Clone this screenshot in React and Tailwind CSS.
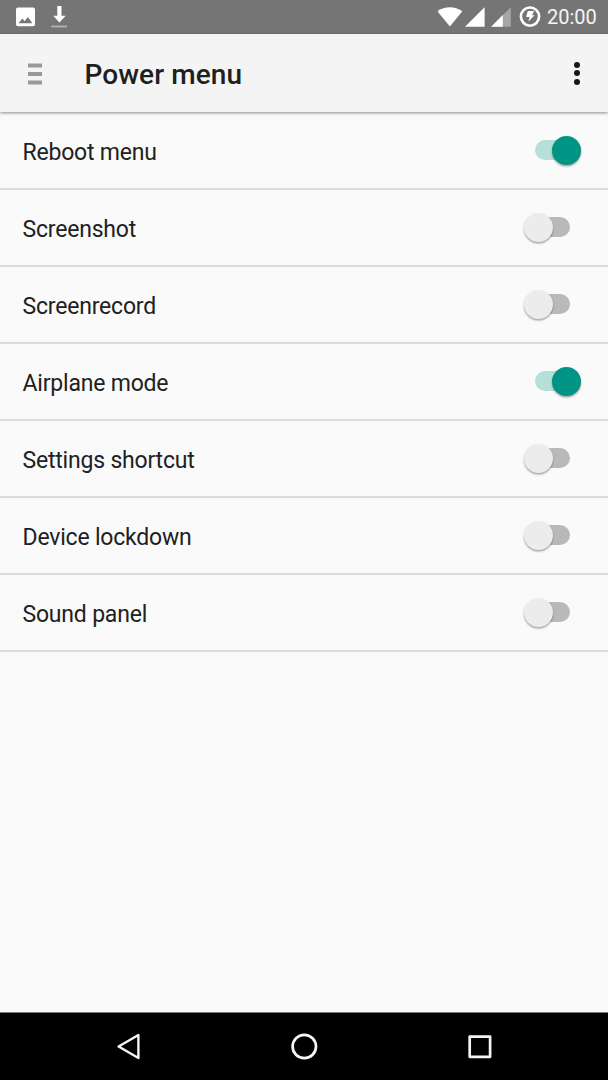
import React, { useState } from 'react'

const items = [
  { label: 'Reboot menu', on: true },
  { label: 'Screenshot', on: false },
  { label: 'Screenrecord', on: false },
  { label: 'Airplane mode', on: true },
  { label: 'Settings shortcut', on: false },
  { label: 'Device lockdown', on: false },
  { label: 'Sound panel', on: false },
]

function Switch({ on, onChange }) {
  return (
    <button
      role="switch"
      aria-checked={on}
      onClick={onChange}
      className={`relative mb-[1px] flex h-[20px] w-[57px] items-center cursor-pointer ${on ? 'justify-end pr-[11px]' : 'justify-start pl-[11px]'}`}
    >
      <span className={`h-[20px] w-[35px] rounded-full ${on ? 'bg-[#b7dfda]' : 'bg-[#b9b9b9]'}`}></span>
      <span
        className={`absolute top-[-4px] h-[28.5px] w-[28.5px] rounded-full shadow-[0_1.5px_2px_rgba(0,0,0,0.35)] ${on ? 'right-[0.5px] bg-[#009485]' : 'left-0 bg-[#ececec]'}`}
      ></span>
    </button>
  )
}

function StatusBar() {
  return (
    <div className="flex h-[34px] items-center justify-between bg-[#757575] pl-[16px] pr-[11px]">
      <div className="flex items-center">
        <svg width="19" height="34" viewBox="0 0 19 34">
          <path fill="#fff" fillRule="evenodd" d="M2 7.500h15a2 2 0 0 1 2 2v14.700a2 2 0 0 1-2 2H2a2 2 0 0 1-2-2V9.500a2 2 0 0 1 2-2zM2.600 23.200h13.800l-4.500-6.200-3.300 4.200-2.300-2.700z" />
        </svg>
        <svg className="ml-[16px]" width="17" height="34" viewBox="0 0 17 34">
          <path fill="#fff" d="M6.300 6h4.200v9.800h4.200L8.400 22.400 2.200 15.800h4.100z" />
          <path fill="#b3b3b3" d="M.3 25.600h15.700v1.800H.3z" />
        </svg>
      </div>
      <div className="flex items-center">
        <svg width="106" height="34" viewBox="0 0 106 34">
          <path fill="#fff" d="M-.6 11.200C6.600 5.800 17 5.800 24.300 11.200L11.900 26.600z" />
          <path fill="#fff" d="M46.600 7.200v19.500H27z" />
          <path fill="#a3a8a6" d="M72.800 7.200v19.500H53.200z" />
          <path fill="#fff" d="M64.800 15.100v11.600H53.200z" />
          <circle cx="92" cy="16.600" r="9.100" fill="none" stroke="#fff" strokeWidth="2.600" />
          <path fill="#fff" d="M89.800 11h6.300l-2 4.200h2.500l-6.300 6.500 1.300-4.600h-3.500z" />
        </svg>
        <span className="ml-[3px] w-[50px] whitespace-nowrap text-[20px] leading-[34px] text-[#f5f5f5]">20:00</span>
      </div>
    </div>
  )
}

function Header() {
  return (
    <header className="relative mb-[1px] flex h-[78px] items-center bg-[#f4f4f4] pl-[28px] pr-[28px] shadow-[0_1px_3px_rgba(0,0,0,0.45)]">
      <button className="mt-[2px] cursor-pointer" aria-label="Open menu">
        <svg width="14" height="22" viewBox="0 0 14 22" fill="#999">
          <path d="M0 .6h14v3.800H0zM0 9.100h14v3.800H0zM0 17.600h14v3.800H0z" />
        </svg>
      </button>
      <h1 className="ml-[42.500px] mt-[3px] flex-1 text-[28px] font-medium leading-[32px] tracking-[0.080px] text-[#1f1f1f]">Power menu</h1>
      <button className="flex flex-col gap-[2.500px] cursor-pointer" aria-label="More options">
        <span className="h-[6px] w-[6px] rounded-full bg-[#171717]"></span>
        <span className="h-[6px] w-[6px] rounded-full bg-[#171717]"></span>
        <span className="h-[6px] w-[6px] rounded-full bg-[#171717]"></span>
      </button>
    </header>
  )
}

function NavBar() {
  return (
    <nav className="flex h-[68px] items-center justify-center gap-[143px] border-t border-[#777] bg-black">
      <button className="cursor-pointer" aria-label="Back">
        <svg width="32" height="32" viewBox="0 0 32 32" fill="none" stroke="#f5f5f5" strokeWidth="2.400" strokeLinejoin="round">
          <path d="M5.600 15.500L25.400 4V27z" />
        </svg>
      </button>
      <button className="cursor-pointer" aria-label="Home">
        <svg width="32" height="32" viewBox="0 0 32 32" fill="none" stroke="#f5f5f5" strokeWidth="2.700">
          <circle cx="16.300" cy="15.500" r="11.700" />
        </svg>
      </button>
      <button className="cursor-pointer" aria-label="Recent apps">
        <svg width="32" height="32" viewBox="0 0 32 32" fill="none" stroke="#f5f5f5" strokeWidth="2.700" strokeLinejoin="round">
          <path d="M6.700 5.600h20.400v20.200H6.700z" />
        </svg>
      </button>
    </nav>
  )
}

export default function App() {
  const [rows, setRows] = useState(items)

  const toggle = (index) => {
    setRows(rows.map((row, i) => (i === index ? { ...row, on: !row.on } : row)))
  }

  return (
    <div className="flex h-[1080px] w-[608px] flex-col overflow-hidden bg-[#fafafa] font-['Roboto',sans-serif]">
      <StatusBar />
      <Header />
      <main className="flex-1">
        {rows.map((row, index) => (
          <div
            key={row.label}
            className="flex h-[77px] items-center justify-between border-b-2 border-[#dcdcdc] pl-[22.500px] pr-[27px]"
          >
            <span className="pt-[4px] text-[23px] leading-[28px] tracking-[-0.200px] text-[#212121]">{row.label}</span>
            <Switch on={row.on} onChange={() => toggle(index)} />
          </div>
        ))}
      </main>
      <NavBar />
    </div>
  )
}
